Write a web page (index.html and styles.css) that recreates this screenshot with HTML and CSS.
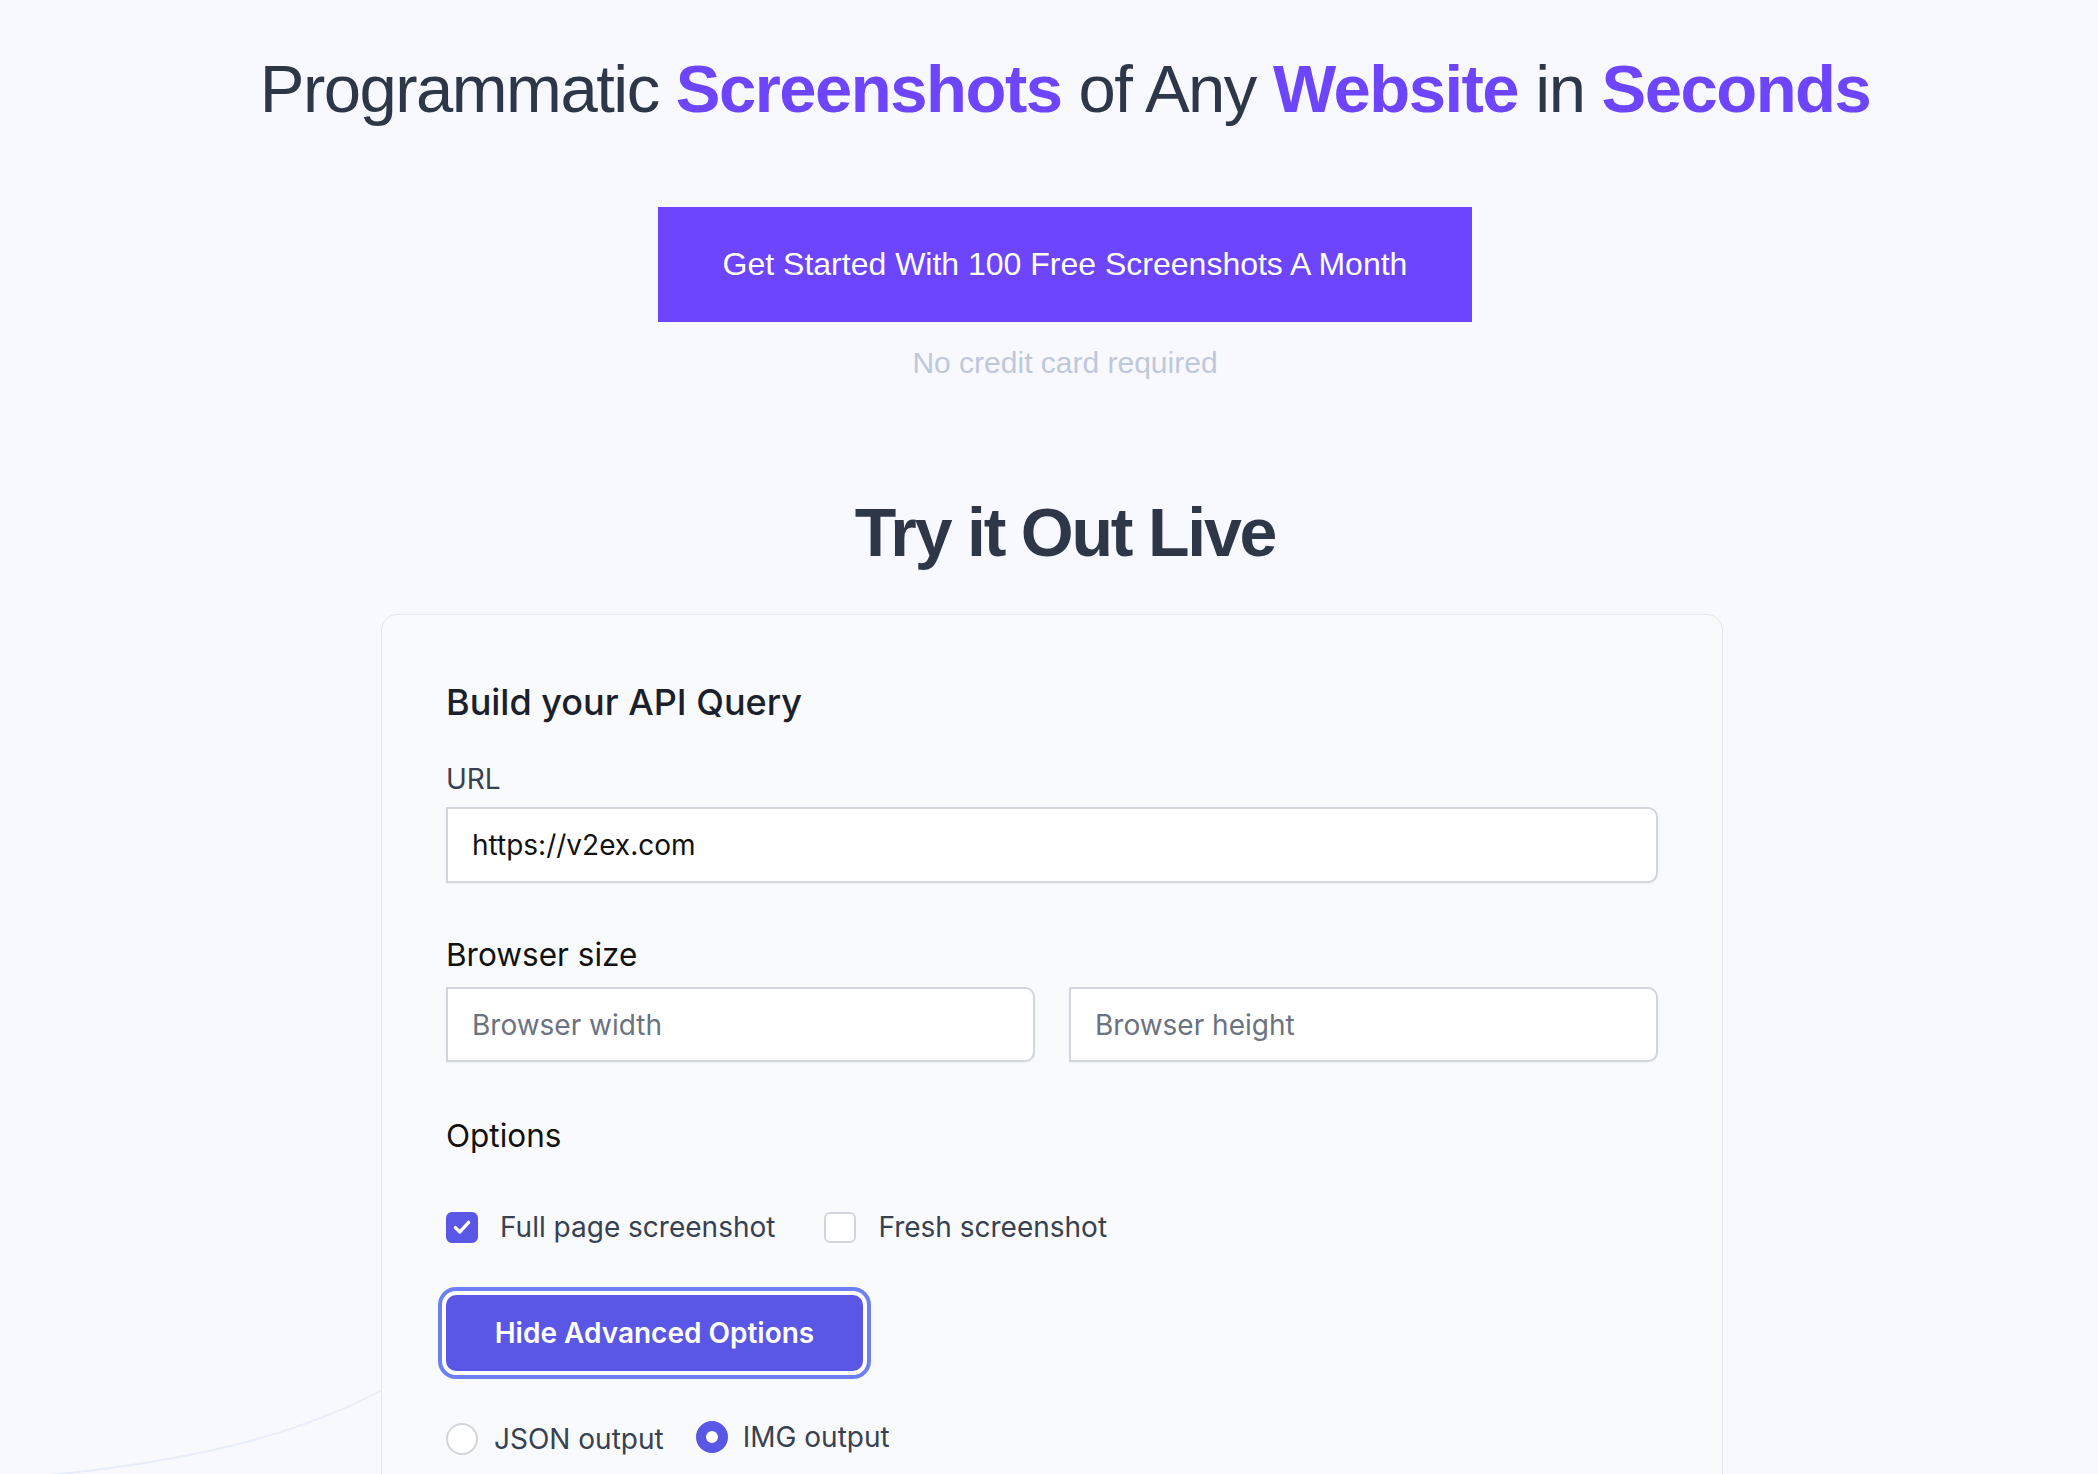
FILE: index.html
```html
<!DOCTYPE html>
<html lang="en">
<head>
<meta charset="utf-8">
<title>Programmatic Screenshots</title>
<link rel="stylesheet" href="styles.css">
</head>
<body>
<svg class="deco" width="2098" height="1474" viewBox="0 0 2098 1474" aria-hidden="true">
  <path d="M 20 1478 C 200 1462, 320 1432, 420 1368" fill="none" stroke="#e7edfb" stroke-width="2"/>
</svg>
<main class="page">
  <section class="hero">
    <h1 class="hero-title">Programmatic <span class="accent">Screenshots</span> of Any <span class="accent">Website</span> in <span class="accent">Seconds</span></h1>
    <a class="cta" href="#">Get Started With 100 Free Screenshots A Month</a>
    <p class="cta-note">No credit card required</p>
    <h2 class="section-title">Try it Out Live</h2>
  </section>

  <section class="card">
    <h3 class="card-title">Build your API Query</h3>

    <label class="field-label" for="url">URL</label>
    <input class="input" id="url" type="text" value="https://v2ex.com">

    <div class="group-label">Browser size</div>
    <div class="size-row">
      <input class="input" type="text" placeholder="Browser width">
      <input class="input" type="text" placeholder="Browser height">
    </div>

    <div class="group-label options-label">Options</div>
    <div class="check-row">
      <label class="check">
        <span class="box checked">
          <svg viewBox="0 0 16 16" width="24" height="24"><path d="M3.6 8.4 L6.6 11.3 L12.4 4.9" fill="none" stroke="#fff" stroke-width="2.2" stroke-linecap="round" stroke-linejoin="round"/></svg>
        </span>
        Full page screenshot
      </label>
      <label class="check">
        <span class="box"></span>
        Fresh screenshot
      </label>
    </div>

    <button class="btn-advanced" type="button">Hide Advanced Options</button>

    <div class="radio-row">
      <label class="radio"><span class="dot"></span>JSON output</label>
      <label class="radio radio-img"><span class="dot selected"></span>IMG output</label>
    </div>
  </section>
</main>
</body>
</html>
```

FILE: styles.css
```css
* { box-sizing: border-box; }

html, body {
  margin: 0;
  padding: 0;
  background: #f8f9fe;
}

body {
  position: relative;
  min-height: 1474px;
  overflow: hidden;
  font-family: Inter, "Noto Sans", sans-serif;
}

.deco {
  position: absolute;
  left: 0;
  top: 0;
  z-index: 0;
  pointer-events: none;
}

.page {
  position: relative;
  z-index: 1;
}

.hero {
  padding-top: 49px;
  padding-left: 32px;
  text-align: center;
  font-family: "Liberation Sans", Arial, sans-serif;
}

.hero-title {
  margin: 0;
  font-size: 67px;
  line-height: 80px;
  font-weight: 400;
  color: #2d3748;
  letter-spacing: -1.5px;
}

.accent {
  color: #6c45fc;
  font-weight: 700;
}

.cta {
  display: inline-block;
  margin-top: 78px;
  width: 814px;
  padding: 40px 0;
  line-height: 35px;
  background: #6c45fc;
  color: #fff;
  font-size: 32px;
  text-decoration: none;
}

.cta-note {
  margin: 24px 0 0;
  font-size: 30px;
  line-height: 34px;
  color: #bfc8da;
}

.section-title {
  margin: 110px 0 0;
  font-size: 68px;
  line-height: 84px;
  font-weight: 700;
  color: #2d3748;
  letter-spacing: -2.2px;
}

.card {
  width: 1342px;
  margin: 40px 0 0 381px;
  padding: 65px 64px 80px;
  background: #f9fafb;
  border: 1.5px solid #e5e7eb;
  border-radius: 16px;
  min-height: 900px;
}

.card-title {
  margin: 0;
  font-size: 36px;
  line-height: 44px;
  font-weight: 500;
  color: #1a202c;
}

.field-label {
  display: block;
  margin-top: 37px;
  font-size: 28px;
  line-height: 36px;
  color: #374151;
}

.input {
  display: block;
  width: 100%;
  height: 76px;
  margin-top: 10px;
  padding: 0 24px;
  font-family: Inter, "Noto Sans", sans-serif;
  font-size: 28px;
  color: #111;
  background: #fff;
  border: 2px solid #d2d5db;
  border-radius: 0 10px 10px 0;
  box-shadow: 0 1px 2px rgba(0, 0, 0, 0.05);
  outline: none;
}

.input::placeholder {
  color: #6b7280;
}

.group-label {
  margin-top: 54px;
  font-size: 31.5px;
  line-height: 36px;
  color: #111;
}

.size-row {
  display: grid;
  grid-template-columns: 1fr 1fr;
  column-gap: 34px;
  margin-top: 4px;
}

.size-row .input {
  height: 75px;
}

.options-label {
  margin-top: 56px;
}

.check-row {
  display: flex;
  align-items: center;
  gap: 49px;
  margin-top: 55px;
  height: 36px;
}

.check {
  display: flex;
  align-items: center;
  gap: 22px;
  font-size: 28px;
  color: #374151;
}

.box {
  width: 32px;
  height: 31px;
  border: 2px solid #d2d5db;
  border-radius: 6px;
  background: #fff;
  display: flex;
  align-items: center;
  justify-content: center;
}

.box.checked {
  background: #5a56e6;
  border-color: #5a56e6;
}

.btn-advanced {
  display: block;
  margin-top: 50px;
  width: 417px;
  height: 76px;
  padding: 0;
  border: 0;
  border-radius: 10px;
  background: #5a56e6;
  color: #fff;
  font-family: Inter, "Noto Sans", sans-serif;
  font-size: 28px;
  font-weight: 600;
  box-shadow: 0 0 0 4px #fff, 0 0 0 8px #6c7ff3;
}

.radio-row {
  display: flex;
  align-items: center;
  gap: 32px;
  margin-top: 51px;
}

.radio {
  display: flex;
  align-items: center;
  gap: 16px;
  font-size: 28px;
  color: #374151;
}

.radio-img {
  gap: 15px;
  transform: translateY(-2px);
}

.dot {
  width: 32px;
  height: 32px;
  border-radius: 50%;
  border: 2px solid #d2d5db;
  background: #fff;
}

.dot.selected {
  border: 10px solid #5a56e6;
  background: #fff;
}
```
